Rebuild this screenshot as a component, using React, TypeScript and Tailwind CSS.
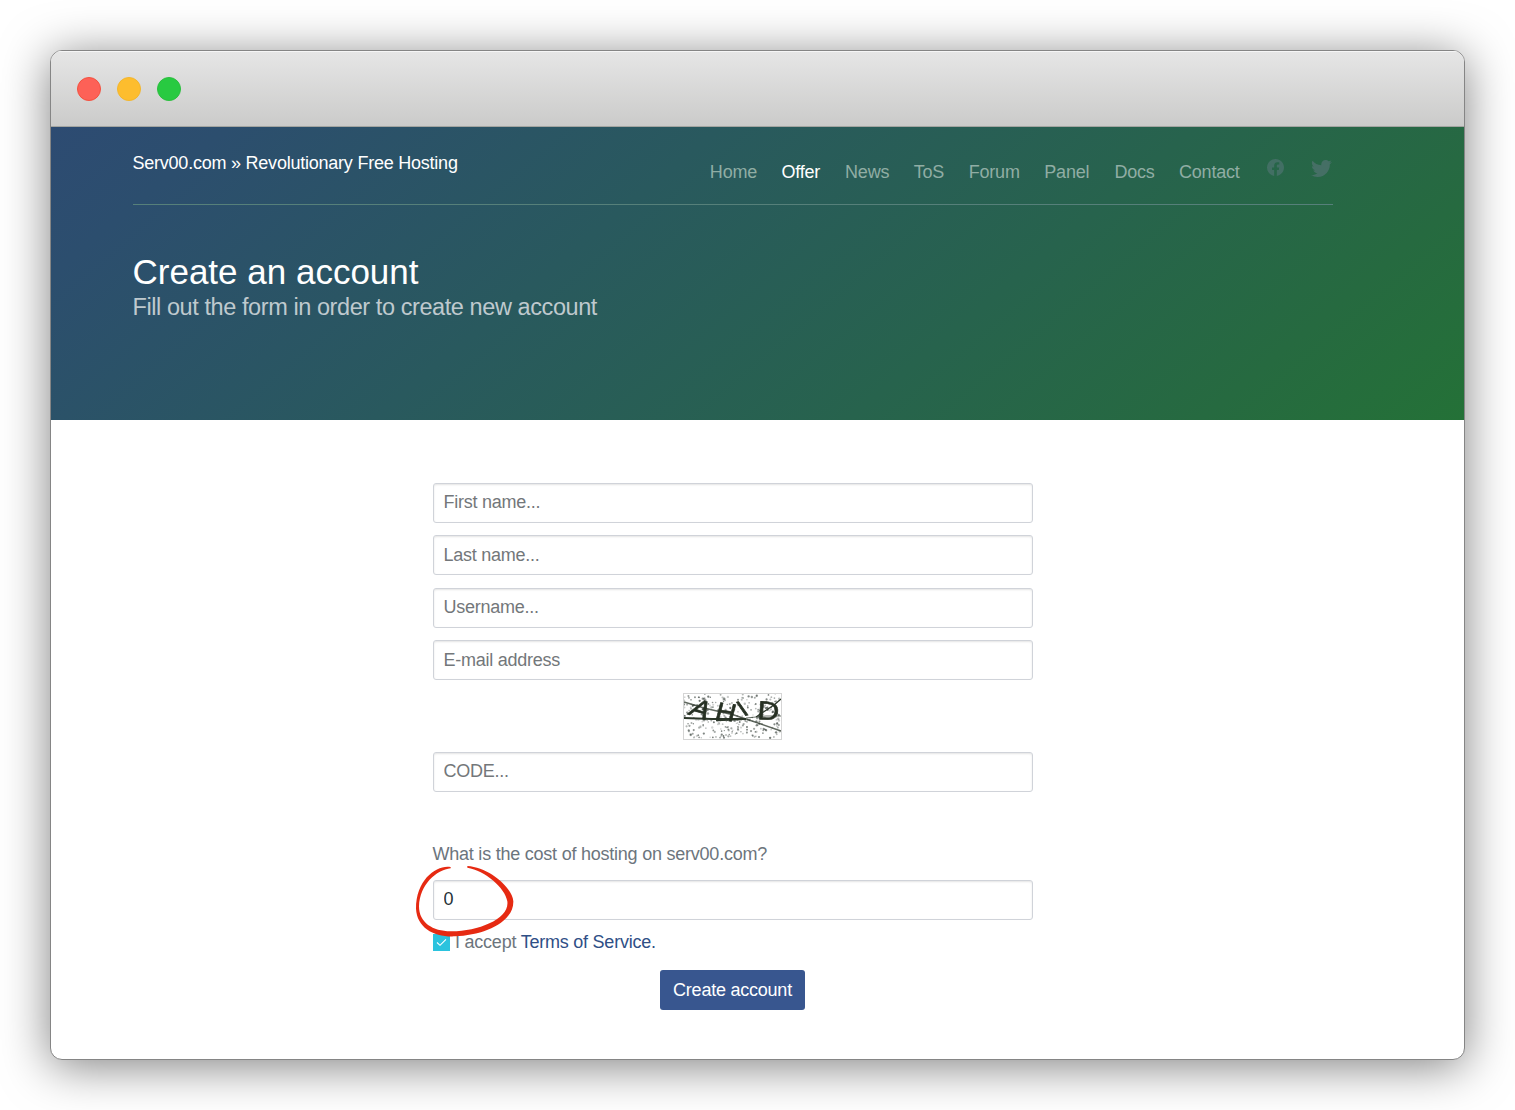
import React from "react";
import { FaTwitter } from "react-icons/fa";
import { BsFacebook } from "react-icons/bs";

const NAV = [
  { label: "Home", width: "w-[47px]" },
  { label: "Offer", width: "w-[39px]", active: true },
  { label: "News", width: "w-[44px]" },
  { label: "ToS", width: "w-[30.5px]" },
  { label: "Forum", width: "w-[51px]" },
  { label: "Panel", width: "w-[45.5px]" },
  { label: "Docs", width: "w-[40px]" },
  { label: "Contact", width: "w-[61px]" },
];

function TitleBar() {
  return (
    <div className="flex h-[76px] shrink-0 items-center gap-4 border-b border-[#a3a5a1] bg-linear-to-b from-[#e6e6e6] to-[#cbcbca] pl-[26px] shadow-[inset_0_1px_0_#f6f6f6]">
      <span className="size-6 rounded-full border border-[#f4513f] bg-[#fd6157]" />
      <span className="size-6 rounded-full border border-[#f3b62c] bg-[#fdbd2e]" />
      <span className="size-6 rounded-full border border-[#2bbf3e] bg-[#28ca41]" />
    </div>
  );
}

function Hero() {
  return (
    <header className="h-[293px] shrink-0 bg-[linear-gradient(140deg,#2d4b72_0%,#2c4e6e_10%,#29595e_38%,#27634d_65%,#266a40_85%,#247137_100%)] pl-[82px]">
      <div className="flex h-[78px] w-[1200px] justify-between border-b border-[#56807a]">
        <div className="mt-[23px] -ml-[0.5px] text-[18px] leading-[26px] tracking-[-0.23px] text-white">
          Serv00.com » Revolutionary Free Hosting
        </div>
        <nav className="flex items-start pt-8">
          <div className="flex gap-[24.6px] text-[18px] leading-[26px] tracking-[-0.2px]">
            {NAV.map((n) => (
              <a
                key={n.label}
                className={`${n.width} whitespace-nowrap ${n.active ? "text-white" : "text-[#90ada4]"}`}
              >
                {n.label}
              </a>
            ))}
          </div>
          <BsFacebook className="ml-[27px] size-[17px] text-[#426f64]" />
          <FaTwitter className="-mt-px mr-px ml-[27px] size-[21px] text-[#456f65]" />
        </nav>
      </div>
      <h1 className="mt-[47px] -ml-[0.5px] text-[35px] leading-[40px] text-white">Create an account</h1>
      <p className="-mt-px -ml-[0.5px] text-[23.5px] leading-[33px] tracking-[-0.42px] text-[#bfc9ce]">
        Fill out the form in order to create new account
      </p>
    </header>
  );
}

function Field({ placeholder, value }: { placeholder?: string; value?: string }) {
  return (
    <input
      className="block h-10 w-full rounded-[3px] border border-[#d0d3d9] bg-white px-[9.5px] pb-[0.2px] text-[18px] tracking-[-0.25px] text-[#263238] shadow-[inset_0_1px_2px_rgba(0,0,0,0.11)] outline-none placeholder:text-[#73777a]"
      placeholder={placeholder}
      defaultValue={value}
    />
  );
}

function makeSpecks(count: number) {
  let seed = 17;
  const next = () => {
    seed = (seed * 16807) % 2147483647;
    return seed / 2147483647;
  };
  return Array.from({ length: count }, () => ({
    x: next() * 96,
    y: next() * 44,
    r: 0.7 + next() * 0.5,
    o: 0.2 + next() * 0.45,
  }));
}

const SPECKS = makeSpecks(300);

function Captcha() {
  return (
    <div className="mr-px h-[47px] w-[99px] overflow-hidden border border-[#d5d5d5] bg-white">
      <svg width="97" height="45" viewBox="0 0 97 45">
        {SPECKS.map((s, i) => (
          <circle key={i} cx={s.x} cy={s.y} r={s.r} fill="#26302a" opacity={s.o} />
        ))}
        <g className="blur-[0.4px]" fill="none" stroke="#2b3629">
          <path d="M0 8 L20 14 L50 21 L74 29 L97 37" strokeWidth="1.4" opacity="0.75" />
          <path d="M0 24 L28 25 L62 25" strokeWidth="2" />
          <path d="M62 24 L82 22 L97 22" strokeWidth="1" opacity="0.7" />
          <path d="M97 5 L90 11 L72 23" strokeWidth="1.3" />
          <path d="M32 26 L58 25" strokeWidth="2.6" />
        </g>
        <g
          className="font-['Liberation_Sans'] text-[25px] blur-[0.4px]"
          fill="#263023"
          stroke="#263023"
          strokeWidth="0.6"
        >
          <text transform="translate(3 20) rotate(18) scale(1.15 1.05) skewX(-12)">A</text>
          <text transform="translate(30 25) rotate(8) scale(1.1 1) skewX(-6)">H</text>
          <text transform="translate(56 23) rotate(-14) scale(1.2 0.85)">\</text>
          <text transform="translate(73 25) rotate(4) scale(1.2 1.04)">D</text>
        </g>
      </svg>
    </div>
  );
}

function HandCircle() {
  return (
    <svg
      className="pointer-events-none absolute -top-[17px] -left-7"
      width="114"
      height="76"
      viewBox="0 85 342 228"
    >
      <path
        fill="#e62a12"
        d="M137 97C98 89 33 132 33 222C36 280 88 308 150 305C235 302 326 264 325 200C322 158 252 98 187 94L187 99C240 108 300 158 307 200C314 252 222 289 140 290C85 291 42 265 42 215C44 150 95 105 137 101Z"
      />
    </svg>
  );
}

function SignupForm() {
  return (
    <main className="ml-[382px] w-[600px] pt-[63px] text-[18px] tracking-[-0.23px] text-[#6c757d]">
      <div className="flex flex-col gap-[12.4px]">
        <Field placeholder="First name..." />
        <Field placeholder="Last name..." />
        <Field placeholder="Username..." />
        <Field placeholder="E-mail address" />
        <div className="flex justify-center">
          <Captcha />
        </div>
        <Field placeholder="CODE..." />
      </div>
      <p className="mt-[49px] -ml-[0.5px] leading-[26px]">
        What is the cost of hosting on serv00.com?
      </p>
      <div className="relative mt-[13px]">
        <Field value="0" />
        <HandCircle />
      </div>
      <label className="mt-[9px] flex h-[26px] items-center">
        <span className="mt-[1px] flex size-[17px] items-center justify-center bg-[#2bc3de]">
          <svg width="11" height="9" viewBox="0 0 11 9" fill="none" stroke="white" strokeWidth="1.1">
            <path d="M1 4.5 4 7.3 10 1.3" />
          </svg>
        </span>
        <span className="ml-[5px] pt-px">
          I accept <a className="text-[#2f4f86]">Terms of Service.</a>
        </span>
      </label>
      <div className="mt-[15px] flex justify-center">
        <button className="mr-px h-10 w-[145px] rounded-[3px] bg-[#38568f] pt-px text-[18px] tracking-[-0.23px] text-white">
          Create account
        </button>
      </div>
    </main>
  );
}

export default function App() {
  return (
    <div className="h-[1110px] w-[1515px] overflow-hidden bg-white p-[50px] font-['Liberation_Sans',Arial,sans-serif]">
      <div className="flex h-[1010px] w-[1415px] flex-col overflow-hidden rounded-xl border border-[#858585] bg-white shadow-[0_6px_48px_rgba(0,0,0,0.5)]">
        <TitleBar />
        <Hero />
        <SignupForm />
      </div>
    </div>
  );
}
